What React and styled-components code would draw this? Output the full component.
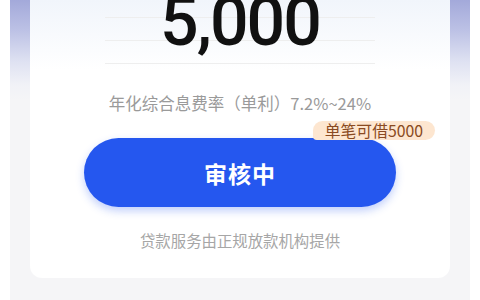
import React from "react";
import styled, { createGlobalStyle } from "styled-components";

const Global = createGlobalStyle`
  html, body { margin: 0; padding: 0; background: #ffffff; }
  body { font-family: "Noto Sans CJK SC", "Noto Sans", sans-serif; }
  * { box-sizing: border-box; }
`;

const Page = styled.div`
  width: 480px;
  height: 300px;
  overflow: hidden;
  padding: 0 10px;
  background: #ffffff;
`;

const Backdrop = styled.div`
  height: 300px;
  padding: 0 20px;
  background: linear-gradient(
    180deg,
    #a3a9da 0px,
    #bcc1e5 30px,
    #dfe2f2 62px,
    #f1f2f7 85px,
    #f5f5f7 100px
  );
`;

const Card = styled.div`
  background: linear-gradient(180deg, #f1f5fb 0px, #ffffff 70px);
  border-radius: 0 0 12px 12px;
  padding: 0 54px 27px;
  display: flex;
  flex-direction: column;
  align-items: center;
`;

const AmountBox = styled.div`
  width: 270px;
  height: 76px;
  margin-top: -12px;
  display: flex;
  justify-content: center;
  background-image:
    linear-gradient(#eeeeee, #eeeeee),
    linear-gradient(#eeeeee, #eeeeee),
    linear-gradient(#eeeeee, #eeeeee);
  background-size: 100% 1px;
  background-repeat: no-repeat;
  background-position: 0 29px, 0 52px, 0 75px;
`;

const Amount = styled.div`
  font-family: Roboto, "Liberation Sans", sans-serif;
  font-size: 68px;
  font-weight: 500;
  line-height: 68px;
  color: #111111;
  letter-spacing: -2px;
`;

const Rate = styled.div`
  margin-top: 28px;
  font-size: 16.5px;
  line-height: 22px;
  color: #9a9a9a;
  white-space: nowrap;
`;

const ButtonWrap = styled.div`
  position: relative;
  width: 312px;
  margin-top: 24px;
`;

const Badge = styled.div`
  position: absolute;
  top: -17px;
  right: -39px;
  height: 19px;
  padding: 0 12px;
  border-radius: 10px 10px 10px 4px;
  background: #fde6d0;
  color: #8a4a22;
  font-size: 15.8px;
  line-height: 19px;
  white-space: nowrap;
  z-index: 1;
`;

const Button = styled.button`
  width: 100%;
  height: 69px;
  border: none;
  border-radius: 35px;
  background: #2557ef;
  color: #ffffff;
  font-family: "Noto Sans CJK SC", sans-serif;
  font-size: 23px;
  font-weight: 700;
  letter-spacing: 1px;
  box-shadow: 0 4px 8px rgba(37, 87, 239, 0.28);
  padding: 0;
`;

const Footer = styled.div`
  margin-top: 22px;
  font-size: 15.4px;
  line-height: 22px;
  color: #a6a6a6;
  white-space: nowrap;
`;

export default function App() {
  return (
    <>
      <Global />
      <Page>
        <Backdrop>
          <Card>
            <AmountBox>
              <Amount>5,000</Amount>
            </AmountBox>
            <Rate>年化综合息费率（单利）7.2%~24%</Rate>
            <ButtonWrap>
              <Badge>单笔可借5000</Badge>
              <Button>审核中</Button>
            </ButtonWrap>
            <Footer>贷款服务由正规放款机构提供</Footer>
          </Card>
        </Backdrop>
      </Page>
    </>
  );
}
